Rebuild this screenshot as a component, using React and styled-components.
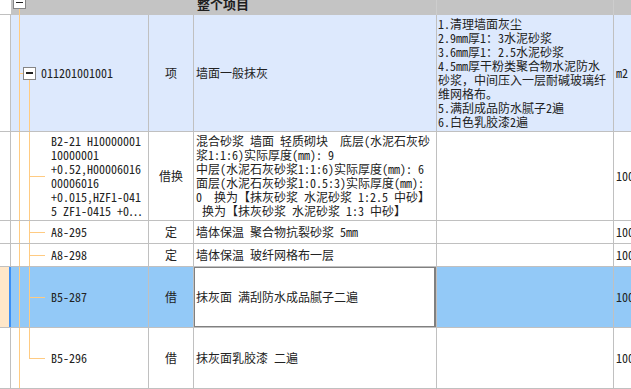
import React from 'react';
import styled, { createGlobalStyle, css } from 'styled-components';

const LINE = '#c0c0c0';
const TREE = '#ffcb82';
const HEAD = '#c4c4c4';
const COLS = '11px 138px 45px 243px 177px 60px';
const FONT = '"Noto Sans Mono CJK SC", "Noto Sans CJK SC", "Liberation Mono", monospace';

const Global = createGlobalStyle`
  html, body { margin: 0; padding: 0; background: #fff; overflow: hidden; }
  body { font-family: ${FONT}; font-size: 12px; color: #222; }
  * { box-sizing: border-box; }
`;

const Sheet = styled.div`
  width: 674px;
  display: flex;
  flex-direction: column;
`;

const HeaderRow = styled.div`
  display: grid;
  grid-template-columns: ${COLS};
  height: 15px;
  overflow: hidden;
`;

const HeadCell = styled.div`
  background: ${p => (p.$gutter ? '#fff' : HEAD)};
  border-bottom: ${p => (p.$gutter ? `1px solid ${LINE}` : 'none')};
  border-right: ${p => (p.$line ? '1px solid #cdcdcd' : 'none')};
  display: flex;
  align-items: flex-end;
  overflow: hidden;
  ${p => p.$tree && css`
    padding: 0 0 6px 2px;
    background: linear-gradient(${TREE}, ${TREE}) 8px 100% / 1px 6px no-repeat, ${HEAD};
  `}
`;

const HeadTitle = styled.div`
  font-weight: bold;
  font-size: 13px;
  line-height: 14px;
  padding: 0 0 4px 3px;
  white-space: nowrap;
  color: #1e1e1e;
`;

const Row = styled.div`
  display: grid;
  grid-template-columns: ${COLS};
  height: ${p => p.$h}px;
  border-bottom: 1px solid ${LINE};
`;

const Gutter = styled.div`
  background: ${p => (p.$selected ? '#ffe7c9' : '#fff')};
  border-right: ${p => (p.$selected ? '2px solid #3b8ff6' : `1px solid ${LINE}`)};
`;

const Cell = styled.div`
  position: relative;
  border-right: 1px solid ${LINE};
  background: ${p => p.$bg || '#fff'};
  display: flex;
  flex-direction: column;
  justify-content: ${p => (p.$top ? 'flex-start' : 'center')};
  align-items: ${p => (p.$center ? 'center' : 'flex-start')};
  padding: ${p => (p.$top ? '2px' : '0')} 0 0 ${p => p.$pl ?? 2}px;
  overflow: hidden;
  white-space: pre;
  line-height: 14px;
  ${p => p.$editing && css`
    &::after {
      content: '';
      position: absolute;
      top: -1px; left: -1px; right: 0; bottom: -1px;
      border: 2px solid #808080;
      pointer-events: none;
    }
  `}
`;

const treeLine = (x, y, w, h) => `linear-gradient(${TREE}, ${TREE}) ${x} ${y} / ${w} ${h} no-repeat`;

const CodeCell = styled(Cell)`
  ${p => p.$kind === 'root' && css`
    flex-direction: row;
    align-items: center;
    justify-content: flex-start;
    padding-left: 12px;
    background: ${treeLine('8px', '0', '1px', '100%')},
      ${treeLine('8px', '50%', '4px', '1px')},
      ${treeLine('18px', '100%', '1px', 'calc(50% - 6px)')},
      ${p.$bg || '#fff'};
  `}
  ${p => (p.$kind === 'child' || p.$kind === 'last') && css`
    padding-left: 40px;
    background: ${treeLine('8px', '0', '1px', '100%')},
      ${treeLine('18px', '0', '1px', p.$kind === 'last' ? '50%' : '100%')},
      ${treeLine('18px', '50%', '16px', '1px')},
      ${p.$bg || '#fff'};
  `}
`;

const ToggleBox = styled.span`
  flex: none;
  width: 13px;
  height: 13px;
  border: 1px solid #858585;
  background: #fff;
  display: flex;
  align-items: center;
  justify-content: center;
  margin-right: ${p => p.$gap ?? 0}px;
  &::before {
    content: '';
    width: 7px;
    height: 1.5px;
    background: #222;
  }
`;

const Text = styled.div`
  line-height: 14px;
  white-space: pre;
`;

const Lines = ({ lines }) => lines.map((l, i) => <Text key={i}>{l}</Text>);

const ROW_BLUE = '#dde9fd';
const SEL = '#93c9f7';

const specLines = [
  '1.清理墙面灰尘',
  '2.9mm厚1：3水泥砂浆',
  '3.6mm厚1：2.5水泥砂浆',
  '4.5mm厚干粉类聚合物水泥防水',
  '砂浆，中间压入一层耐碱玻璃纤',
  '维网格布。',
  '5.满刮成品防水腻子2遍',
  '6.白色乳胶漆2遍',
];

const codeLines = [
  'B2-21 H10000001',
  '10000001',
  '+0.52,H00006016',
  '00006016',
  '+0.015,HZF1-041',
  '5 ZF1-0415 +0…',
];

const nameLines = [
  '混合砂浆 墙面 轻质砌块　底层(水泥石灰砂',
  '浆1:1:6)实际厚度(mm): 9',
  '中层(水泥石灰砂浆1:1:6)实际厚度(mm): 6',
  '面层(水泥石灰砂浆1:0.5:3)实际厚度(mm):',
  '0  换为【抹灰砂浆 水泥砂浆 1:2.5 中砂】',
  ' 换为【抹灰砂浆 水泥砂浆 1:3 中砂】',
];

const children = [
  { h: 23, code: 'A8-295', type: '定', name: '墙体保温 聚合物抗裂砂浆 5mm' },
  { h: 23, code: 'A8-298', type: '定', name: '墙体保温 玻纤网格布一层' },
  { h: 61, code: 'B5-287', type: '借', name: '抹灰面 满刮防水成品腻子二遍', selected: true },
  { h: 61, code: 'B5-296', type: '借', name: '抹灰面乳胶漆 二遍', last: true },
];

export default function App() {
  return (
    <>
      <Global />
      <Sheet>
        <HeaderRow>
          <HeadCell $gutter />
          <HeadCell $tree><ToggleBox /></HeadCell>
          <HeadCell />
          <HeadCell $line><HeadTitle>整个项目</HeadTitle></HeadCell>
          <HeadCell $line />
          <HeadCell />
        </HeaderRow>

        <Row $h={117}>
          <Gutter />
          <CodeCell $kind="root" $bg={ROW_BLUE}>
            <ToggleBox $gap={5} />
            <Text>011201001001</Text>
          </CodeCell>
          <Cell $bg={ROW_BLUE} $center $pl={0}>项</Cell>
          <Cell $bg={ROW_BLUE}>墙面一般抹灰</Cell>
          <Cell $bg={ROW_BLUE} $top $pl={1}><Lines lines={specLines} /></Cell>
          <Cell $bg={ROW_BLUE} $pl={2}>m2</Cell>
        </Row>

        <Row $h={89}>
          <Gutter />
          <CodeCell $kind="child" $top><Lines lines={codeLines} /></CodeCell>
          <Cell $center $pl={0}>借换</Cell>
          <Cell $top><Lines lines={nameLines} /></Cell>
          <Cell />
          <Cell $pl={2}>100</Cell>
        </Row>

        {children.map((c, i) => {
          const bg = c.selected ? SEL : '#fff';
          return (
            <Row key={i} $h={c.h}>
              <Gutter $selected={c.selected} />
              <CodeCell $kind={c.last ? 'last' : 'child'} $bg={bg}>{c.code}</CodeCell>
              <Cell $bg={bg} $center $pl={0}>{c.type}</Cell>
              <Cell $editing={c.selected}>{c.name}</Cell>
              <Cell $bg={bg} />
              <Cell $bg={bg} $pl={2}>100</Cell>
            </Row>
          );
        })}
      </Sheet>
    </>
  );
}
